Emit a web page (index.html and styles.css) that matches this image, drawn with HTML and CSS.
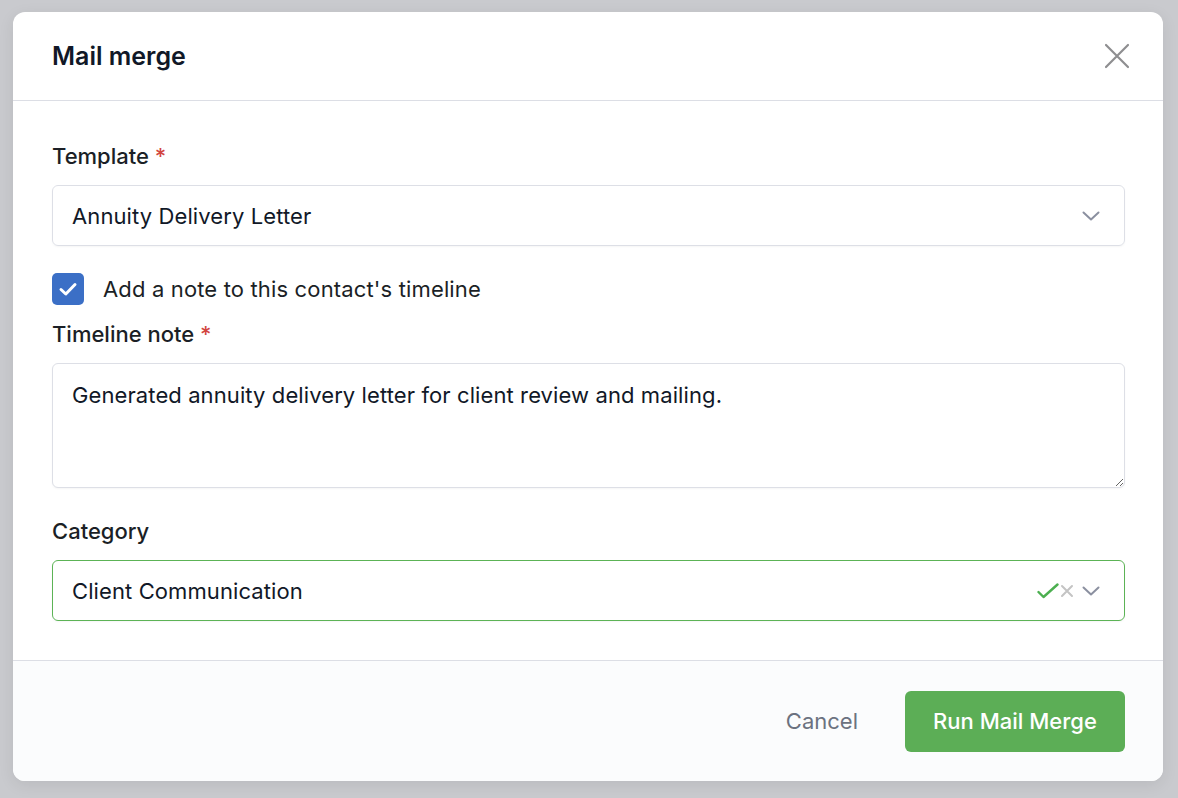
FILE: index.html
```html
<!DOCTYPE html>
<html lang="en">
<head>
<meta charset="utf-8">
<title>Mail merge</title>
<link rel="stylesheet" href="styles.css">
</head>
<body>
<div class="backdrop">
  <div class="modal">
    <div class="modal-header">
      <h2 class="modal-title">Mail merge</h2>
      <button class="close-btn" aria-label="Close">
        <svg width="26" height="26" viewBox="0 0 26 26"><path d="M2 2 L24 24 M24 2 L2 24" stroke="#8e8e90" stroke-width="2.2" stroke-linecap="round" fill="none"/></svg>
      </button>
    </div>
    <div class="modal-body">
      <label class="field-label">Template <span class="req">*</span></label>
      <div class="select">
        <span class="select-value">Annuity Delivery Letter</span>
        <svg class="chev" width="18" height="10" viewBox="0 0 18 10"><path d="M1.5 1.5 L9 8.5 L16.5 1.5" stroke="#8b90a0" stroke-width="2" fill="none" stroke-linecap="round" stroke-linejoin="round"/></svg>
      </div>
      <div class="check-row">
        <span class="checkbox">
          <svg width="20" height="16" viewBox="0 0 20 16"><path d="M3 8.5 L7.8 13 L17 3.5" stroke="#fff" stroke-width="3" fill="none" stroke-linecap="round" stroke-linejoin="round"/></svg>
        </span>
        <span class="check-label">Add a note to this contact's timeline</span>
      </div>
      <label class="field-label label-tight">Timeline note <span class="req">*</span></label>
      <textarea class="textarea">Generated annuity delivery letter for client review and mailing.</textarea>
      <label class="field-label label-cat">Category</label>
      <div class="select select-valid">
        <span class="select-value">Client Communication</span>
        <span class="select-icons">
          <svg width="22" height="16" viewBox="0 0 22 16"><path d="M1.5 9 L6.5 14 L20.5 1.5" stroke="#4caf50" stroke-width="2.4" fill="none" stroke-linecap="round" stroke-linejoin="round"/></svg>
          <svg width="14" height="14" viewBox="0 0 14 14"><path d="M2 2 L12 12 M12 2 L2 12" stroke="#c4c4c4" stroke-width="2" fill="none" stroke-linecap="round"/></svg>
          <svg class="chev2" width="18" height="10" viewBox="0 0 18 10"><path d="M1.5 1.5 L9 8.5 L16.5 1.5" stroke="#8b90a0" stroke-width="2" fill="none" stroke-linecap="round" stroke-linejoin="round"/></svg>
        </span>
      </div>
    </div>
    <div class="modal-footer">
      <button class="btn-cancel">Cancel</button>
      <button class="btn-primary">Run Mail Merge</button>
    </div>
  </div>
</div>
</body>
</html>
```

FILE: styles.css
```css
* { box-sizing: border-box; }
html, body { margin: 0; padding: 0; }
body {
  background: #c9cace;
  font-family: Inter, "Noto Sans", "Liberation Sans", sans-serif;
  color: #111827;
  width: 1178px;
  height: 798px;
  overflow: hidden;
}
.backdrop {
  padding: 12px 15px 17px 13px;
}
.modal {
  width: 1150px;
  height: 769px;
  background: #fff;
  border-radius: 12px;
  overflow: hidden;
  display: flex;
  flex-direction: column;
  box-shadow: 0 4px 16px rgba(0,0,0,0.08);
}
.modal-header {
  height: 89px;
  border-bottom: 1px solid #dcdee5;
  display: flex;
  align-items: center;
  justify-content: space-between;
  padding: 0 33px 0 39px;
}
.modal-title {
  margin: 0;
  font-size: 25px;
  line-height: 32px;
  font-weight: 600;
  color: #111827;
}
.close-btn {
  background: none;
  border: 0;
  padding: 0;
  width: 26px;
  height: 26px;
  cursor: pointer;
  display: flex;
}
.modal-body {
  padding: 41px 38px 39px 39px;
  display: flex;
  flex-direction: column;
  border-bottom: 1px solid #dcdee5;
}
.field-label {
  font-size: 22px;
  line-height: 28px;
  font-weight: 500;
  color: #1b1f26;
  margin-bottom: 15px;
}
.req { color: #d2453f; }
.label-tight { margin-top: 15px; }
.label-cat { margin-top: 29px; }
.select {
  height: 61px;
  border: 1px solid #dddfe6;
  border-radius: 6px;
  display: flex;
  align-items: center;
  justify-content: space-between;
  padding: 0 24px 0 19px;
  box-shadow: 0 1px 2px rgba(0,0,0,0.04);
}
.select-value {
  font-size: 22px;
  letter-spacing: 0.1px;
  color: #111827;
}
.chev { margin-top: 1px; }
.select-valid {
  border-color: #5cb356;
}
.select-icons {
  display: flex;
  align-items: center;
}
.select-icons svg:nth-child(2) { margin-left: 1px; }
.chev2 { margin-left: 8px; }
.check-row {
  display: flex;
  align-items: center;
  margin-top: 27px;
  height: 32px;
}
.checkbox {
  width: 32px;
  height: 32px;
  border-radius: 5px;
  background: #3b6fc6;
  display: flex;
  align-items: center;
  justify-content: center;
}
.check-label {
  margin-left: 19px;
  font-size: 22px;
  letter-spacing: 0.15px;
  color: #1b1f26;
}
.textarea {
  height: 125px;
  border: 1px solid #dddfe6;
  border-radius: 6px;
  padding: 17px 19px;
  font-family: inherit;
  font-size: 22px;
  letter-spacing: 0.1px;
  line-height: 28px;
  color: #111827;
  resize: vertical;
  outline: none;
  box-shadow: 0 1px 2px rgba(0,0,0,0.04);
}
.modal-footer {
  flex: 1;
  background: #fbfcfd;
  display: flex;
  align-items: center;
  justify-content: flex-end;
  padding: 0 38px 0 0;
}
.btn-cancel {
  background: none;
  border: 0;
  font-family: inherit;
  font-size: 22px;
  color: #6b7280;
  padding: 0 24px;
  height: 61px;
  margin-right: 23px;
  cursor: pointer;
}
.btn-primary {
  width: 220px;
  height: 61px;
  background: #5cae56;
  color: #fff;
  border: 0;
  border-radius: 6px;
  font-family: inherit;
  font-size: 22px;
  font-weight: 500;
  cursor: pointer;
}
```
